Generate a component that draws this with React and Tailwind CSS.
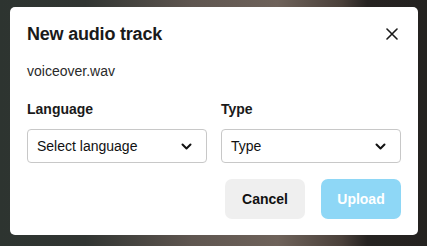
import React from 'react';

const Chevron = () => (
  <svg className="w-[11px] h-[7px] shrink-0" viewBox="0 0 11 7" fill="none" stroke="#111" strokeWidth={2} strokeLinecap="round" strokeLinejoin="round">
    <path d="M1.5 1.5l4 4 4-4" />
  </svg>
);

const SelectBox = ({ label }) => (
  <div className="w-full h-[34px] flex items-center justify-between pl-[9px] pr-[14px] border border-[#c8c8c8] rounded-[4px] bg-white text-[14px] text-[#111]">
    <span>{label}</span>
    <Chevron />
  </div>
);

export default function App() {
  return (
    <div
      className="w-[427px] h-[246px] overflow-hidden pt-[7px] pl-[10px] font-['Liberation_Sans',Arial,sans-serif]"
      style={{
        background:
          'linear-gradient(90deg, #2d3430 0%, #313532 20%, #5f5650 45%, #6e625a 65%, #4a403a 80%, #262321 86%, #242220 100%)',
      }}
    >
      <div className="w-[408px] h-[228px] bg-white rounded-[5px] px-[17px] pt-[14px] pb-[16px] flex flex-col">
        <div className="flex items-center justify-between h-[26px]">
          <h1 className="text-[18px] font-bold text-[#1a1a1a] tracking-[-0.2px]">New audio track</h1>
          <svg className="w-[12px] h-[12px] mr-[3px]" viewBox="0 0 12 12" fill="none" stroke="#1a1a1a" strokeWidth={1.6} strokeLinecap="round">
            <path d="M1 1l10 10M11 1L1 11" />
          </svg>
        </div>
        <div className="mt-[15px] text-[14px] text-[#2a2a2a] leading-[18px]">voiceover.wav</div>
        <div className="mt-[20px] flex gap-[14px]">
          <div className="flex-1 flex flex-col">
            <div className="text-[14px] font-bold text-[#1a1a1a] leading-[18px] mb-[11px]">Language</div>
            <SelectBox label="Select language" />
          </div>
          <div className="flex-1 flex flex-col">
            <div className="text-[14px] font-bold text-[#1a1a1a] leading-[18px] mb-[11px]">Type</div>
            <SelectBox label="Type" />
          </div>
        </div>
        <div className="mt-[16px] flex justify-end gap-[16px]">
          <button className="w-[80px] h-[40px] rounded-[7px] bg-[#efefef] text-[14px] font-bold text-[#111]">Cancel</button>
          <button className="w-[80px] h-[40px] rounded-[7px] bg-[#8ed7f6] text-[14px] font-bold text-white">Upload</button>
        </div>
      </div>
    </div>
  );
}
